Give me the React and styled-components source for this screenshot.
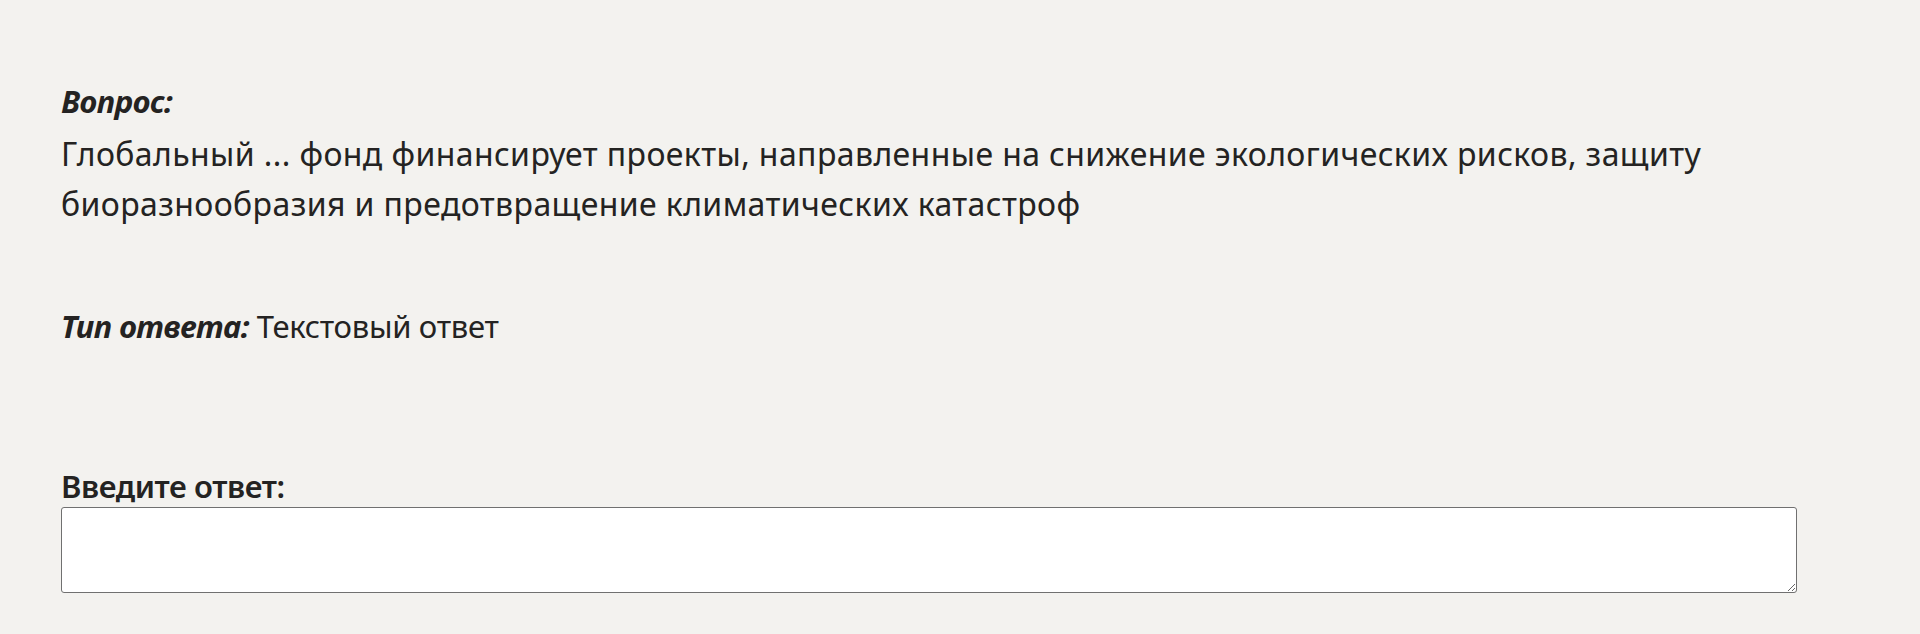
import React from 'react';
import styled, { createGlobalStyle } from 'styled-components';

const GlobalStyle = createGlobalStyle`
  html, body {
    margin: 0;
    padding: 0;
    background-color: #f3f2ef;
  }
  body {
    font-family: "Noto Sans", "Open Sans", sans-serif;
    color: #242322;
  }
`;

const QuestionPage = styled.div`
  padding: 76px 123px 40px 61px;
  font-size: 31px;
  line-height: 50px;
`;

const Caption = styled.div`
  font-style: italic;
  font-weight: 700;
  letter-spacing: -0.5px;
`;

const QuestionText = styled.p`
  margin: 3px 0 0;
  font-size: 32px;
  letter-spacing: 0.4px;
`;

const AnswerType = styled.p`
  margin: 72px 0 0;
  letter-spacing: -0.3px;
`;

const TypeLabel = styled.span`
  font-style: italic;
  font-weight: 700;
  letter-spacing: -0.5px;
`;

const AnswerLabel = styled.label`
  display: block;
  margin-top: 115px;
  line-height: 40px;
  font-weight: 600;
  letter-spacing: -0.4px;
`;

const AnswerInput = styled.textarea`
  display: block;
  box-sizing: border-box;
  margin-top: 1px;
  width: 1736px;
  height: 86px;
  background: #fff;
  border: 1.5px solid #707070;
  border-radius: 3px;
  font: inherit;
`;

const App = () => (
  <>
    <GlobalStyle />
    <QuestionPage>
      <Caption>Вопрос:</Caption>
      <QuestionText>
        Глобальный ... фонд финансирует проекты, направленные на снижение экологических рисков, защиту
        биоразнообразия и предотвращение климатических катастроф
      </QuestionText>
      <AnswerType>
        <TypeLabel>Тип ответа:</TypeLabel> Текстовый ответ
      </AnswerType>
      <AnswerLabel htmlFor="answer">Введите ответ:</AnswerLabel>
      <AnswerInput id="answer" />
    </QuestionPage>
  </>
);

export default App;
